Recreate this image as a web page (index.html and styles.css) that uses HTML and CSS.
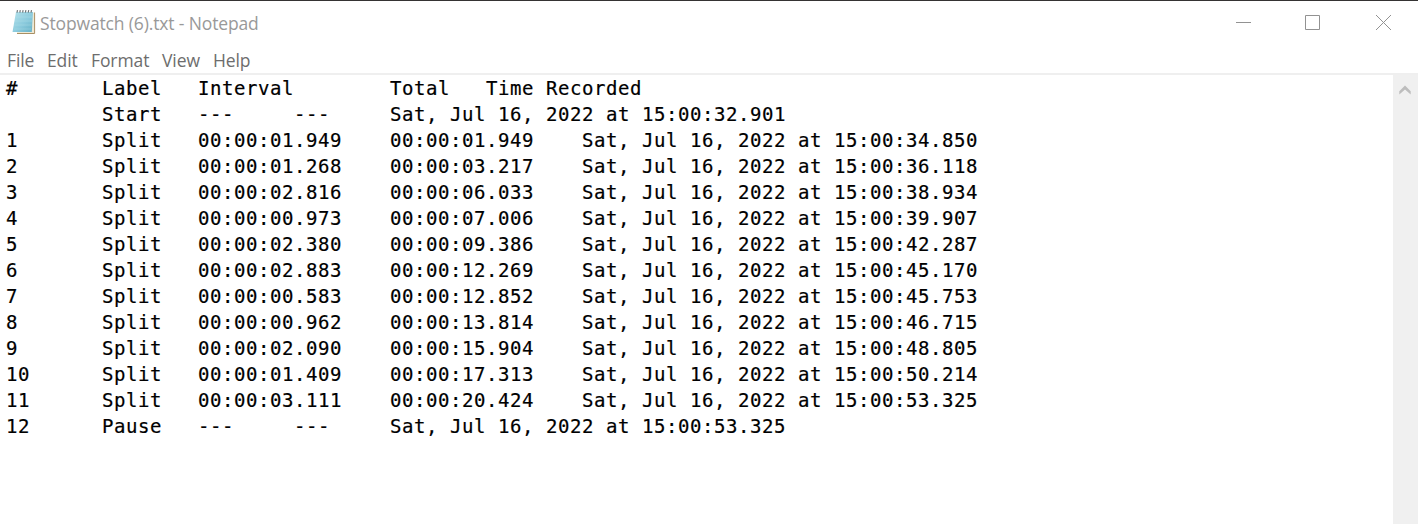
FILE: index.html
```html
<!DOCTYPE html>
<html lang="en">
<head>
<meta charset="utf-8">
<title>Stopwatch (6).txt - Notepad</title>
<link rel="stylesheet" href="styles.css">
</head>
<body>
<div class="window">
  <header class="titlebar">
    <svg class="app-icon" width="24" height="26" viewBox="0 0 24 26">
      <defs><linearGradient id="page" x1="0" y1="0" x2="1" y2="1"><stop offset="0" stop-color="#b5e2ec"/><stop offset=".55" stop-color="#8ccbdd"/><stop offset="1" stop-color="#65b0c6"/></linearGradient></defs>
      <path d="M6 3.5H22.5V24.5H5Z" fill="#eee9d5"/>
      <path d="M22.6 3.5V24.5H5" fill="none" stroke="#a98f63" stroke-width="1"/>
      <path d="M4 3H21L19.8 23H.5Z" fill="url(#page)"/>
      <path d="M3.5 8H20M3 12H20M2.5 16H19.5M2 20H19" stroke="#b3e1ea" stroke-width=".7" opacity=".6"/>
      <path d="M5.5 1.2 5 3.6M8.3 1.2 7.8 3.6M11.1 1.2 10.6 3.6M13.9 1.2 13.4 3.6M16.7 1.2 16.2 3.6M19.5 1.2 19 3.6" stroke="#6f7779" stroke-width="1.2"/>
    </svg>
    <span class="title">Stopwatch (6).txt - Notepad</span>
    <div class="controls">
      <svg width="15" height="15" viewBox="0 0 15 15"><path d="M0 7.5H15"/></svg>
      <svg width="15" height="15" viewBox="0 0 15 15"><path d="M.5 .5H14.5V14.5H.5Z"/></svg>
      <svg class="close" width="15" height="15" viewBox="0 0 15 15"><path d="M0 0 15 15M15 0 0 15"/></svg>
    </div>
  </header>
  <nav class="menu">
    <span class="file">File</span><span class="edit">Edit</span><span class="format">Format</span><span class="view">View</span><span class="help">Help</span>
  </nav>
  <main class="editor">
<pre class="text">#       Label   Interval        Total   Time Recorded
        Start   ---     ---     Sat, Jul 16, 2022 at 15:00:32.901
1       Split   00:00:01.949    00:00:01.949    Sat, Jul 16, 2022 at 15:00:34.850
2       Split   00:00:01.268    00:00:03.217    Sat, Jul 16, 2022 at 15:00:36.118
3       Split   00:00:02.816    00:00:06.033    Sat, Jul 16, 2022 at 15:00:38.934
4       Split   00:00:00.973    00:00:07.006    Sat, Jul 16, 2022 at 15:00:39.907
5       Split   00:00:02.380    00:00:09.386    Sat, Jul 16, 2022 at 15:00:42.287
6       Split   00:00:02.883    00:00:12.269    Sat, Jul 16, 2022 at 15:00:45.170
7       Split   00:00:00.583    00:00:12.852    Sat, Jul 16, 2022 at 15:00:45.753
8       Split   00:00:00.962    00:00:13.814    Sat, Jul 16, 2022 at 15:00:46.715
9       Split   00:00:02.090    00:00:15.904    Sat, Jul 16, 2022 at 15:00:48.805
10      Split   00:00:01.409    00:00:17.313    Sat, Jul 16, 2022 at 15:00:50.214
11      Split   00:00:03.111    00:00:20.424    Sat, Jul 16, 2022 at 15:00:53.325
12      Pause   ---     ---     Sat, Jul 16, 2022 at 15:00:53.325</pre>
    <div class="scrollbar">
      <svg width="12" height="10" viewBox="0 0 12 10"><path d="M.3 6.2 6 .5 11.7 6.2V9.5L6 4.4.3 9.5Z"/></svg>
    </div>
  </main>
</div>
</body>
</html>
```
FILE: styles.css
```css
* { box-sizing: border-box; }
body { margin: 0; background: #fff; font-family: "Open Sans", "Noto Sans", sans-serif; }
.window { height: 524px; display: flex; flex-direction: column; border-top: 1px solid #353333; overflow: hidden; }
.titlebar { height: 46px; flex: none; display: flex; align-items: flex-start; padding: 8px 27px 0 12px; }
.app-icon { flex: none; }
.title { margin: 1px 0 0 4px; font-size: 17.5px; letter-spacing: -0.14px; line-height: 26px; color: #999; white-space: nowrap; }
.controls { margin-left: auto; padding-top: 6px; display: flex; gap: 54px; }
.controls svg { display: block; fill: none; stroke: #929292; stroke-width: 1; }
.controls .close { margin-left: 2px; }
.menu { height: 26px; flex: none; display: flex; gap: 14px; padding-left: 7px; font-size: 17.5px; letter-spacing: -0.1px; line-height: 26px; color: #6d6d6d; white-space: nowrap; }
.file { width: 26px; }
.edit { width: 30px; }
.format { width: 57px; }
.view { width: 37px; }
.editor { flex: 1; min-height: 0; display: flex; border-top: 2px solid #efefef; }
.text { flex: 1; margin: 0; padding: 0 0 0 6px; font-family: "DejaVu Sans Mono", monospace; font-size: 19px; letter-spacing: 0.562px; line-height: 26px; color: #000; -webkit-text-stroke: 0.2px #000; }
.scrollbar { width: 25px; flex: none; background: #f0f0f0; padding: 10px 0 0 6px; }
.scrollbar svg { display: block; fill: #bdbdbd; }
```
